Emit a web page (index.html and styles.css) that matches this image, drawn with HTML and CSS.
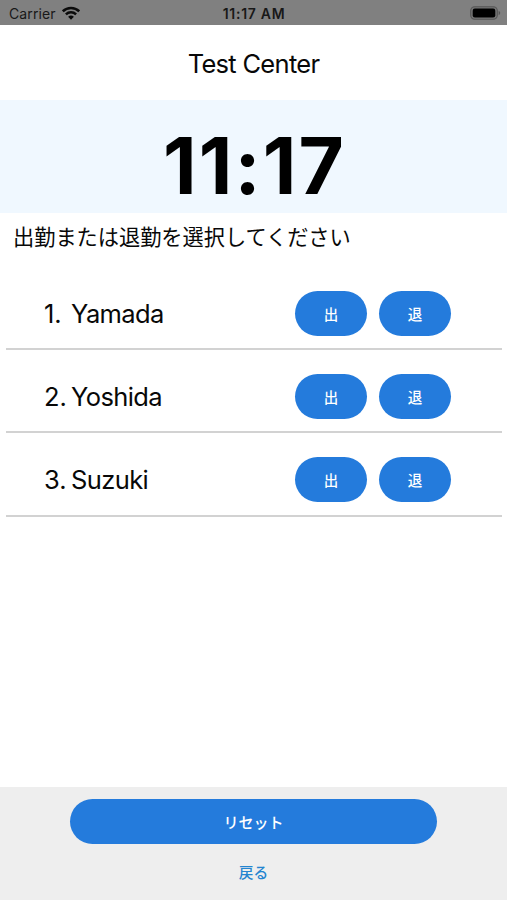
FILE: index.html
```html
<!DOCTYPE html>
<html lang="ja">
<head>
<meta charset="utf-8">
<title>Test Center</title>
<link rel="stylesheet" href="styles.css">
</head>
<body>
<div class="app">
  <div class="status">
    <div class="status-left">
      <span class="carrier">Carrier</span>
      <svg class="wifi" width="18" height="14" viewBox="0 0 18 14" fill="none" stroke="#0b0b0b" stroke-width="2.5">
        <path d="M.8 5.3a11.7 11.7 0 0 1 16.4 0"/>
        <path d="M3.9 8.4a7.3 7.3 0 0 1 10.2 0"/>
        <path d="M9 13.8 6.1 10.8a4.2 4.2 0 0 1 5.8 0z" fill="#0b0b0b" stroke="none"/>
      </svg>
    </div>
    <span class="status-time">11:17 AM</span>
    <div class="status-right">
      <svg class="battery" width="31" height="14" viewBox="0 0 31 14">
        <rect x=".7" y=".7" width="26.6" height="12.6" rx="4" fill="#747474" stroke="#555" stroke-width="1.1"/>
        <rect x="2.7" y="2.5" width="22.6" height="9" rx="2.2" fill="#000"/>
        <path d="M28.6 4.8c2.1.8 2.1 3.6 0 4.4z" fill="#555"/>
      </svg>
    </div>
  </div>
  <header class="header"><h1 class="title">Test Center</h1></header>
  <section class="clock"><span class="clock-time">11:17</span></section>
  <p class="prompt">出勤または退勤を選択してください</p>
  <ul class="staff">
    <li class="row"><span class="num">1.</span><span class="name">Yamada</span><button class="btn">出</button><button class="btn">退</button></li>
    <li class="row"><span class="num">2.</span><span class="name">Yoshida</span><button class="btn">出</button><button class="btn">退</button></li>
    <li class="row"><span class="num">3.</span><span class="name">Suzuki</span><button class="btn">出</button><button class="btn">退</button></li>
  </ul>
  <footer class="footer">
    <button class="btn reset">リセット</button>
    <a class="back">戻る</a>
  </footer>
</div>
</body>
</html>
```
FILE: styles.css
```css
* { box-sizing: border-box; }
body {
  margin: 0;
  background: #fff;
  color: #080808;
  font-family: Inter, "Noto Sans CJK JP", sans-serif;
}
.app { display: flex; flex-direction: column; height: 900px; }
.status {
  display: grid;
  grid-template-columns: 1fr auto 1fr;
  align-items: center;
  height: 25px;
  padding: 2px 6px 0 9px;
  background: #808080;
  color: #181818;
}
.status-left { display: flex; align-items: center; gap: 6px; }
.carrier { font-size: 14px; letter-spacing: .1px; }
.wifi { margin-bottom: 2px; }
.status-time { font-size: 14px; font-weight: 600; letter-spacing: .7px; margin-left: -2px; }
.status-right { display: flex; justify-content: flex-end; padding-bottom: 1px; }
.header { display: flex; align-items: center; justify-content: center; height: 75px; padding-top: 1px; }
.title { margin: 0; font-size: 25.5px; font-weight: 400; letter-spacing: -.7px; }
.clock {
  display: flex;
  align-items: center;
  justify-content: center;
  height: 113px;
  padding-top: 19px;
  background: #f0f8ff;
  color: #000;
}
.clock-time { font-size: 78px; font-weight: 700; line-height: 1; letter-spacing: 2.1px; margin-right: -2px; }
.prompt { margin: 0; padding: 0 13px; height: 54px; font-size: 21.2px; line-height: 48px; white-space: nowrap; }
.staff { list-style: none; margin: 0; padding: 0 5px 0 6px; }
.row {
  display: flex;
  align-items: center;
  height: 83.2px;
  padding: 12px 51px 0 38px;
  border-bottom: 2px solid #d2d2d2;
  font-size: 25.5px;
}
.num { width: 27px; }
.name { flex: 1; letter-spacing: -.6px; }
.btn {
  width: 72px;
  height: 45px;
  margin: 0 0 0 12px;
  padding: 0;
  border: 0;
  border-radius: 23px;
  background: #247bdc;
  color: #fff;
  font: 500 14.5px/44px "Noto Sans CJK JP", sans-serif;
  text-align: center;
}
.footer {
  display: flex;
  flex-direction: column;
  align-items: center;
  height: 113px;
  margin-top: auto;
  padding-top: 12px;
  background: #eee;
}
.reset { width: 367px; margin: 0; font-size: 15px; }
.back { margin-top: 16px; color: #2485d0; font: 500 14.7px/24px "Noto Sans CJK JP", sans-serif; }
```
